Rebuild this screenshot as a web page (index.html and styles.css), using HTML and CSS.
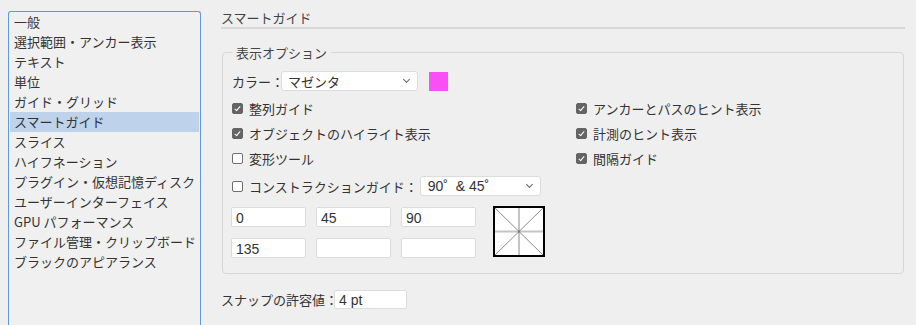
FILE: index.html
```html
<!DOCTYPE html>
<html lang="ja">
<head>
<meta charset="UTF-8">
<meta name="viewport" content="width=device-width, initial-scale=1.0">
<title>環境設定</title>
<link rel="stylesheet" href="styles.css">
</head>
<body>

<div class="prefs">
    <ul class="sidebar">
        <li>一般</li>
        <li>選択範囲・アンカー表示</li>
        <li>テキスト</li>
        <li>単位</li>
        <li>ガイド・グリッド</li>
        <li class="selected">スマートガイド</li>
        <li>スライス</li>
        <li>ハイフネーション</li>
        <li>プラグイン・仮想記憶ディスク</li>
        <li>ユーザーインターフェイス</li>
        <li>GPU パフォーマンス</li>
        <li>ファイル管理・クリップボード</li>
        <li>ブラックのアピアランス</li>
    </ul>

    <div class="main">
        <div class="title">スマートガイド</div>

        <fieldset class="group">
            <legend>表示オプション</legend>

            <div class="color-row">
                <span class="label">カラー：</span>
                <div class="select color-select">
                    <span>マゼンタ</span>
                    <span class="chevron"></span>
                </div>
                <div class="swatch"></div>
            </div>

            <div class="checks">
                <div class="col left">
                    <div class="check"><span class="box on"></span>整列ガイド</div>
                    <div class="check"><span class="box on"></span>オブジェクトのハイライト表示</div>
                    <div class="check"><span class="box"></span>変形ツール</div>
                </div>
                <div class="col">
                    <div class="check"><span class="box on"></span>アンカーとパスのヒント表示</div>
                    <div class="check"><span class="box on"></span>計測のヒント表示</div>
                    <div class="check"><span class="box on"></span>間隔ガイド</div>
                </div>
            </div>

            <div class="construct-row">
                <div class="check"><span class="box"></span>コンストラクションガイド：</div>
                <div class="select angle-select">
                    <span>90˚&nbsp; &amp; 45˚</span>
                    <span class="chevron"></span>
                </div>
            </div>

            <div class="angles">
                <div class="fields">
                    <div class="field">0</div>
                    <div class="field">45</div>
                    <div class="field">90</div>
                    <div class="field">135</div>
                    <div class="field"></div>
                    <div class="field"></div>
                </div>
                <svg class="preview" width="52" height="51" viewBox="0 0 52 51">
                    <rect x="1" y="1" width="50" height="49" fill="#fff" stroke="#000" stroke-width="2"/>
                    <line x1="26" y1="2" x2="26" y2="49" stroke="#c4c4c4" stroke-width="2"/>
                    <line x1="2" y1="25.5" x2="50" y2="25.5" stroke="#c4c4c4" stroke-width="2"/>
                    <line x1="2" y1="2" x2="50" y2="49" stroke="#8c8c8c" stroke-width="1"/>
                    <line x1="50" y1="2" x2="2" y2="49" stroke="#8c8c8c" stroke-width="1"/>
                    <rect x="25" y="24.5" width="2" height="2" fill="#777"/>
                </svg>
            </div>
        </fieldset>

        <div class="snap-row">
            <span class="label">スナップの許容値：</span>
            <div class="field snap">4 pt</div>
        </div>
    </div>
</div>

</body>
</html>
```

FILE: styles.css
```css
body {
    margin: 0;
    background-color: #efefef;
    font-family: "Noto Sans CJK JP", "Noto Sans", sans-serif;
    font-size: 13px;
    color: #333;
    overflow: hidden;
}
.prefs {
    display: flex;
    padding: 11px 11px 0 8px;
}
.sidebar {
    list-style: none;
    margin: 0;
    padding: 0 1px;
    width: 189px;
    height: 313px;
    border: 1px solid #5f9ad6;
    border-bottom: none;
    border-radius: 3px 3px 0 0;
    background-color: #f0f0f0;
}
.sidebar li {
    height: 20px;
    line-height: 20px;
    padding-left: 4px;
    white-space: nowrap;
}
.sidebar li.selected {
    background-color: #bed2ec;
}
.main {
    flex: 1;
    margin-left: 20px;
}
.title {
    height: 17px;
    line-height: 16px;
    margin-top: -1px;
    border-bottom: 2px solid #d8d8d8;
    color: #444;
}
.group {
    margin: 15px 1px 0 1px;
    padding: 10px 8px 15px 8px;
    border: 1px solid #d6d6d6;
    border-radius: 4px;
}
.group legend {
    padding: 0 4px;
    margin-left: 1px;
    line-height: 17px;
    color: #444;
}
.color-row {
    display: flex;
    align-items: center;
    height: 20px;
    margin-left: 1px;
}
.label {
    white-space: nowrap;
}
.select {
    display: flex;
    align-items: center;
    justify-content: space-between;
    height: 19px;
    padding: 0 8px 0 6px;
    background-color: #fff;
    border: 1px solid #dcdcdc;
    border-radius: 3px;
    box-sizing: border-box;
}
.color-select {
    width: 137px;
    height: 20px;
    margin-left: -3px;
}
.chevron {
    width: 4px;
    height: 4px;
    border-right: 1px solid #666;
    border-bottom: 1px solid #666;
    transform: rotate(45deg);
    margin-top: -3px;
}
.swatch {
    width: 19px;
    height: 19px;
    margin-left: 11px;
    background-color: #fa4ff4;
}
.checks {
    display: flex;
    margin-top: 5px;
    margin-left: 1px;
}
.col {
    display: flex;
    flex-direction: column;
}
.col.left {
    width: 344px;
}
.check {
    display: flex;
    align-items: center;
    height: 25px;
    white-space: nowrap;
}
.box {
    width: 11px;
    height: 11px;
    margin-right: 6px;
    background-color: #fff;
    border: 1px solid #6e6e6e;
    border-radius: 2px;
    box-sizing: border-box;
    position: relative;
}
.box.on {
    background-color: #646464;
    border-color: #646464;
}
.box.on::after {
    content: "";
    position: absolute;
    left: 3px;
    top: 1px;
    width: 2px;
    height: 5px;
    border-right: 1.5px solid #fff;
    border-bottom: 1.5px solid #fff;
    transform: rotate(40deg);
}
.construct-row {
    display: flex;
    align-items: center;
    margin-top: 5px;
    margin-left: 1px;
    height: 20px;
}
.angle-select {
    width: 121px;
    height: 20px;
    margin-left: 2px;
    padding-left: 7px;
    font-size: 14px;
    font-family: "Liberation Sans", "Noto Sans CJK JP", sans-serif;
}
.angles {
    display: flex;
    align-items: flex-start;
    margin-top: 11px;
}
.fields {
    display: grid;
    grid-template-columns: repeat(3, 75px);
    gap: 11px 10px;
}
.field {
    height: 20px;
    line-height: 20px;
    padding-left: 4px;
    background-color: #fff;
    border: 1px solid #dcdcdc;
    border-radius: 2px;
    box-sizing: border-box;
    font-size: 14px;
    font-family: "Liberation Sans", "Noto Sans CJK JP", sans-serif;
}
.preview {
    display: block;
    margin-left: 17px;
    margin-top: -1px;
}
.snap-row {
    display: flex;
    align-items: center;
    margin-top: 16px;
}
.field.snap {
    width: 73px;
    height: 19px;
    line-height: 18px;
    margin-left: -4px;
}
```
